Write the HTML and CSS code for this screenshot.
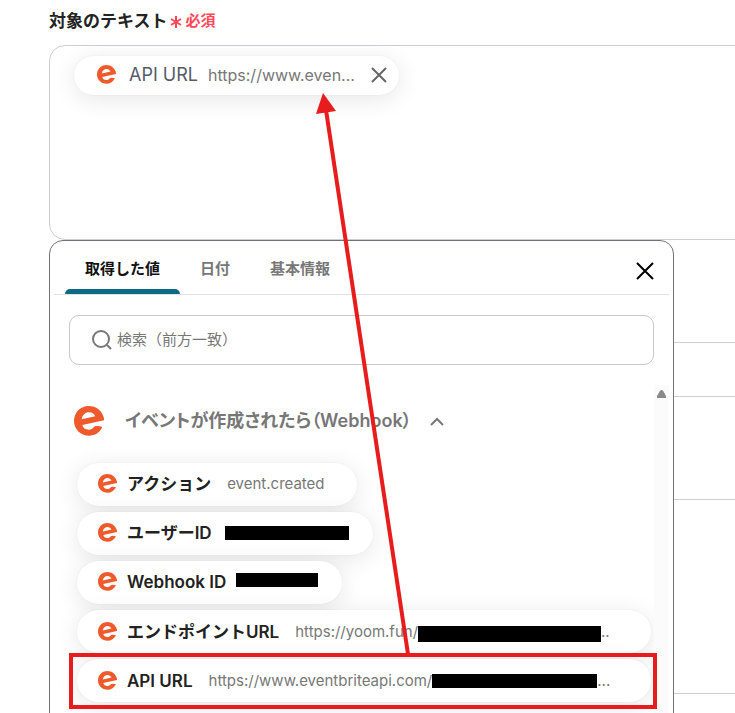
FILE: index.html
```html
<!DOCTYPE html>
<html lang="ja">

<head>
    <meta charset="utf-8">
    <title>対象のテキスト</title>
    <link rel="stylesheet" href="styles.css">
</head>

<body>
    <!-- shared logo -->
    <svg class="symbols" aria-hidden="true">
        <symbol id="logo" viewBox="0 0 90 90">
            <path fill-rule="evenodd" d="M89 34C83 13 66 0 44 0C19 0 0 20 0 45C0 70 20 89 45 89C63 89 77 80 85 63Q73 58 62 61C57 68 51 71 44 71C34 71 27 66 25 57L90 43Q91 39 89 34ZM23 40C25 27 34 19 45 19C54 19 60 23 64 31Z"/>
        </symbol>
    </svg>

    <main class="form">
        <div class="fieldLabel">
            <span id="targetLabel">対象のテキスト</span>
            <span class="required"><svg class="asterisk" viewBox="0 0 12 12"><path d="M6 0v12M1 3l10 6M11 3L1 9"/></svg>必須</span>
        </div>

        <div class="field">
            <div class="textBox" role="group" aria-labelledby="targetLabel">
                <div class="chip selected">
                    <svg class="logo"><use href="#logo"/></svg>
                    <span class="name">API URL</span>
                    <span class="value">https://www.even...</span>
                    <button class="iconButton remove" aria-label="削除">
                        <svg viewBox="0 0 16 16"><path d="M1 1l14 14M15 1L1 15"/></svg>
                    </button>
                </div>
            </div>

            <div class="panel">
                <div class="panelHead">
                    <div class="tabs" role="tablist">
                        <button class="tab active" role="tab" aria-selected="true">取得した値</button>
                        <button class="tab" role="tab">日付</button>
                        <button class="tab" role="tab">基本情報</button>
                    </div>
                    <button class="iconButton close" aria-label="閉じる">
                        <svg viewBox="0 0 18 18"><path d="M1 1l16 16M17 1L1 17"/></svg>
                    </button>
                </div>

                <label class="search">
                    <svg viewBox="0 0 20 20"><circle cx="9" cy="9" r="8"/><path d="M15 15l4 4"/></svg>
                    <input type="search" placeholder="検索（前方一致）" aria-label="検索">
                </label>

                <div class="results">
                    <div class="resultList">
                        <button class="groupHead">
                            <svg class="logo large"><use href="#logo"/></svg>
                            <span class="groupName">イベントが作成されたら（Webhook）</span>
                            <svg class="chevron" viewBox="0 0 14 9"><path d="M1 8l6-6 6 6"/></svg>
                        </button>
                        <ul class="chips">
                            <li><button class="chip">
                                <svg class="logo"><use href="#logo"/></svg>
                                <span class="name">アクション</span>
                                <span class="value wide">event.created</span>
                            </button></li>
                            <li><button class="chip">
                                <svg class="logo"><use href="#logo"/></svg>
                                <span class="name">ユーザーID</span>
                                <span class="value"><i class="mask user"></i></span>
                            </button></li>
                            <li><button class="chip">
                                <svg class="logo"><use href="#logo"/></svg>
                                <span class="name">Webhook ID</span>
                                <span class="value"><i class="mask hook"></i></span>
                            </button></li>
                            <li><button class="chip full">
                                <svg class="logo"><use href="#logo"/></svg>
                                <span class="name">エンドポイントURL</span>
                                <span class="value wide">https://yoom.fun/<i class="mask endpoint"></i>..</span>
                            </button></li>
                            <li><button class="chip full">
                                <svg class="logo"><use href="#logo"/></svg>
                                <span class="name">API URL</span>
                                <span class="value wide">https://www.eventbriteapi.com/<i class="mask api"></i>...</span>
                            </button></li>
                        </ul>
                    </div>
                    <div class="scrollbar"><svg viewBox="0 0 9 8"><path d="M4 0h1q1 0 4 6v2H0V6Q3 0 4 0Z"/></svg></div>
                </div>
            </div>
        </div>

        <div class="row"></div>
        <div class="row gap"></div>
        <div class="row"></div>
        <div class="row tall"></div>
    </main>

    <!-- callout from the API URL item to the text box -->
    <svg class="callout" aria-hidden="true">
        <rect x="71" y="655" width="584" height="52"/>
        <path class="line" d="M326 110L408 654"/>
        <path class="head" d="M323 93L316 114L336 111Z"/>
    </svg>
</body>

</html>
```
FILE: styles.css
```css
* {
    box-sizing: border-box;
}

body {
    margin: 0;
    height: 100vh;
    overflow: hidden;
    position: relative;
    background: #fff;
    color: #222;
    font-family: Inter, "Noto Sans CJK JP", sans-serif;
    line-height: 24px;
}

button {
    margin: 0;
    padding: 0;
    border: 0;
    background: none;
    color: inherit;
    font: inherit;
    cursor: pointer;
}

.symbols {
    display: none;
}

.form {
    margin-left: 49px;
    margin-right: -24px;
}

.fieldLabel {
    display: flex;
    align-items: center;
    gap: 2px;
    height: 45px;
    padding-bottom: 4px;
    font-size: 17px;
    font-weight: 600;
}

.required {
    display: flex;
    align-items: center;
    gap: 4px;
    color: #ff4757;
    font-size: 15px;
}

.asterisk {
    width: 12px;
    height: 12px;
    margin-top: 3px;
    fill: none;
    stroke: #ff4757;
    stroke-width: 2;
}

.field {
    position: relative;
}

.textBox {
    height: 195px;
    padding: 10px 24px;
    border: 1px solid #ccced6;
    border-radius: 16px;
}

/* chips */
.chip {
    display: flex;
    align-items: center;
    width: fit-content;
    height: 43px;
    padding: 0 32px 2px 21px;
    border-radius: 22px;
    background: #fff;
    box-shadow: 0 4px 24px rgba(0, 0, 0, .1), 0 0 2px rgba(0, 0, 0, .06);
    text-align: left;
    white-space: nowrap;
}

.chip.full {
    width: 100%;
    padding-bottom: 0;
}

.chip.selected {
    height: 39px;
    padding: 0 12px 2px 23px;
    color: #555b66;
}

.logo {
    flex: none;
    width: 19px;
    height: 19px;
    fill: #ee5a2b;
}

.logo.large {
    width: 30px;
    height: 30px;
}

.name {
    margin-left: 10px;
    font-size: 17px;
    font-weight: 600;
}

.selected .name {
    margin-left: 13px;
    font-size: 18px;
    font-weight: 400;
}

.value {
    display: flex;
    align-items: center;
    margin-left: 10px;
    color: #777;
    font-size: 15px;
}

.value.wide {
    margin-left: 16px;
}

.selected .value {
    font-size: 16px;
}

.mask {
    height: 14px;
    background: #000;
}

.mask.user {
    width: 124px;
    margin-left: 3px;
    margin-right: -8px;
}

.mask.hook {
    width: 82px;
    margin-right: -8px;
    margin-bottom: 4px;
}

.mask.endpoint {
    width: 183px;
    height: 16px;
    margin-top: 4px;
}

.mask.api {
    width: 165px;
}

.iconButton svg {
    display: block;
    fill: none;
    stroke: currentColor;
    stroke-width: 2;
}

.remove {
    margin-left: 16px;
    color: #666;
}

.remove svg {
    width: 16px;
    height: 16px;
}

/* drop-down panel */
.panel {
    position: absolute;
    top: 100%;
    left: 0;
    width: 625px;
    height: 560px;
    padding: 0 4px;
    border: 1px solid #6f7277;
    border-radius: 14px;
    background: #fff;
}

.panelHead {
    display: flex;
    align-items: center;
    justify-content: space-between;
    height: 54px;
    padding: 0 15px 0 11px;
    border-bottom: 1px solid #e2e2e2;
}

.tabs {
    display: flex;
    align-self: stretch;
}

.tab {
    display: flex;
    flex-direction: column;
    justify-content: space-between;
    padding: 16px 20px 0;
    color: #777;
    font-size: 15px;
    font-weight: 600;
}

.tab::after {
    content: "";
    align-self: stretch;
    height: 5px;
    margin: 0 -20px;
    border-radius: 5px 5px 0 0;
}

.tab.active {
    color: #111;
}

.tab.active::after {
    background: #0e6982;
}

.close {
    margin-top: 6px;
    color: #000;
}

.close svg {
    width: 18px;
    height: 18px;
}

.search {
    display: flex;
    align-items: center;
    gap: 5px;
    height: 50px;
    margin: 20px 15px;
    padding: 0 22px;
    border: 1px solid #c8c8c8;
    border-radius: 10px;
}

.search svg {
    width: 20px;
    height: 20px;
    fill: none;
    stroke: #777;
    stroke-width: 2;
}

.search input {
    flex: 1;
    min-width: 0;
    padding: 0;
    border: 0;
    outline: 0;
    background: none;
    font: inherit;
    font-size: 15px;
}

.search input::placeholder {
    color: #777;
}

.results {
    display: flex;
    height: 400px;
    overflow: hidden;
}

.resultList {
    flex: 1;
    padding: 21px 3px 0 20px;
}

.groupHead {
    display: flex;
    align-items: center;
    height: 30px;
    color: #777;
    font-size: 18px;
    font-weight: 600;
    font-feature-settings: "palt";
}

.groupName {
    margin-left: 21px;
}

.chevron {
    width: 14px;
    height: 9px;
    margin-left: 18px;
    fill: none;
    stroke: #777;
    stroke-width: 2;
}

.chips {
    display: flex;
    flex-direction: column;
    gap: 6px;
    margin: 27px 0 0 3px;
    padding: 0;
    list-style: none;
}

.scrollbar {
    width: 15px;
    padding: 5px 3px;
    background: #fbfbfb;
}

.scrollbar svg {
    display: block;
    width: 9px;
    height: 8px;
    fill: #8a8a8a;
}

/* following rows of the form */
.row {
    height: 103px;
    border-bottom: 1px solid #ccced6;
}

.row.gap {
    height: 54px;
}

.row.tall {
    height: 194px;
}

.callout {
    position: absolute;
    top: 0;
    left: 0;
    width: 100%;
    height: 100%;
    pointer-events: none;
}

.callout rect,
.callout .line {
    fill: none;
    stroke: #e81c1c;
    stroke-width: 4;
}

.callout .head {
    fill: #e81c1c;
}
```
